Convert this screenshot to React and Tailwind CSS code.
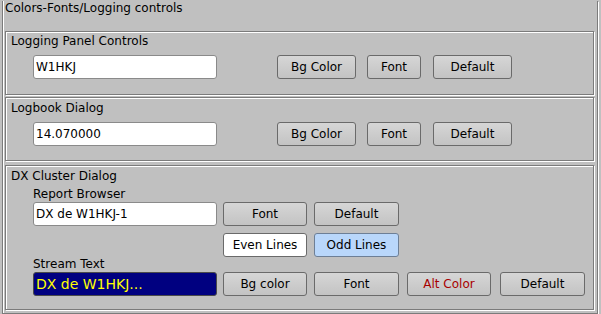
import React from 'react';

const font = { fontFamily: '"DejaVu Sans", Verdana, sans-serif' };

function Frame({ className = '', children }) {
  return (
    <div
      className={`border border-[#7b7b7b] shadow-[1px_1px_0_#ffffff,inset_1px_1px_0_#ffffff] ${className}`}
    >
      {children}
    </div>
  );
}

function Button({ label, className = '', tone = 'gray' }) {
  const skins = {
    gray: 'border-[#6a6a6a] bg-linear-to-b from-[#d6d6d6] to-[#c3c3c3] text-black',
    white: 'border-[#6a6a6a] bg-white text-black',
    blue: 'border-[#6d7f96] bg-[#b9d7fb] text-black',
    red: 'border-[#6a6a6a] bg-linear-to-b from-[#d6d6d6] to-[#c3c3c3] text-[#a80000]',
  };
  return (
    <div
      className={`h-[24px] rounded-[3px] border flex items-center justify-center text-[12px] leading-[14px] ${skins[tone]} ${className}`}
    >
      {label}
    </div>
  );
}

function Field({ value, className = '', dark = false }) {
  return (
    <div
      className={`h-[24px] w-[184px] ml-[27px] rounded-[3px] border flex items-center pl-[2px] ${
        dark
          ? 'bg-[#000080] border-[#4a4a4a] text-[#ffff00] text-[14px] leading-[16px]'
          : 'bg-white border-[#8a8a8a] text-black text-[12px] leading-[14px]'
      } ${className}`}
    >
      {value}
    </div>
  );
}

function Label({ text, className = '' }) {
  return <div className={`h-[14px] text-[12px] leading-[14px] text-black ${className}`}>{text}</div>;
}

function ColorRow({ value }) {
  return (
    <div className="flex mt-[7px]">
      <Field value={value} />
      <Button label="Bg Color" className="ml-[60px] w-[79px]" />
      <Button label="Font" className="ml-[11px] w-[54px]" />
      <Button label="Default" className="ml-[12px] w-[79px]" />
    </div>
  );
}

export default function App() {
  return (
    <div className="w-[601px] h-[314px] bg-[#c0c0c0] overflow-hidden" style={font}>
      <div className="ml-[2px] w-[596px] h-[313px] border border-t-0 border-[#7b7b7b] shadow-[1px_1px_0_#ffffff,inset_1px_0_0_#ffffff]">
        <Label text="Colors-Fonts/Logging controls" className="mt-[1px] pl-[2px]" />

        <Frame className="mt-[16px] ml-[2px] w-[589px] h-[64px]">
          <Label text="Logging Panel Controls" className="mt-[2px] pl-[5px]" />
          <ColorRow value="W1HKJ" />
        </Frame>

        <Frame className="mt-[2px] ml-[2px] w-[589px] h-[64px]">
          <Label text="Logbook Dialog" className="mt-[3px] pl-[5px]" />
          <ColorRow value="14.070000" />
        </Frame>

        <Frame className="mt-[4px] ml-[2px] w-[589px] h-[145px]">
          <Label text="DX Cluster Dialog" className="mt-[3px] pl-[5px]" />
          <Label text="Report Browser" className="mt-[4px] pl-[27px]" />
          <div className="flex mt-[1px]">
            <Field value="DX de W1HKJ-1" />
            <Button label="Font" className="ml-[6px] w-[84px]" />
            <Button label="Default" className="ml-[7px] w-[85px]" />
          </div>
          <div className="flex mt-[7px] ml-[217px]">
            <Button label="Even Lines" tone="white" className="w-[84px]" />
            <Button label="Odd Lines" tone="blue" className="ml-[7px] w-[85px]" />
          </div>
          <Label text="Stream Text" className="pl-[27px]" />
          <div className="flex mt-[1px]">
            <Field value="DX de W1HKJ..." dark />
            <Button label="Bg color" className="ml-[6px] w-[84px]" />
            <Button label="Font" className="ml-[7px] w-[85px]" />
            <Button label="Alt Color" tone="red" className="ml-[8px] w-[84px]" />
            <Button label="Default" className="ml-[9px] w-[85px]" />
          </div>
        </Frame>
      </div>
    </div>
  );
}
